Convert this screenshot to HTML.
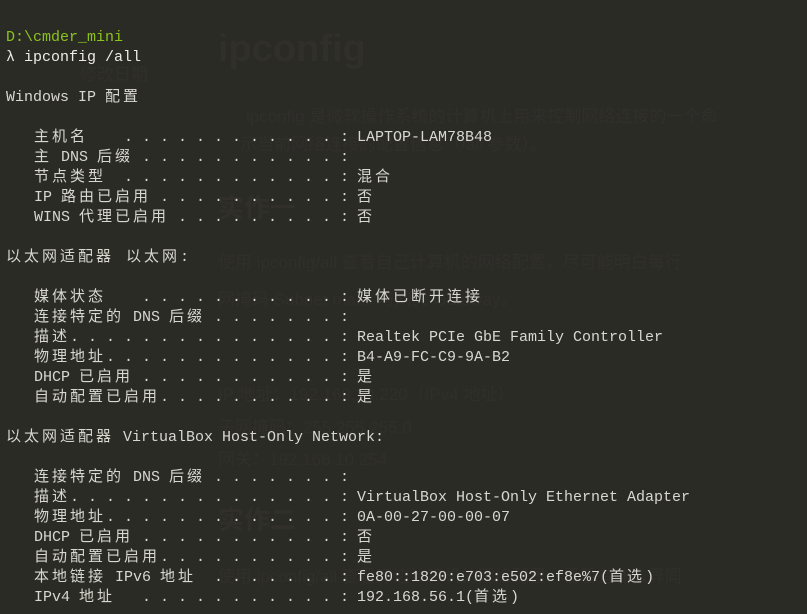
<!DOCTYPE html>
<html><head><meta charset="utf-8"><style>
html,body{margin:0;padding:0}
body{width:807px;height:614px;background:#2b2b26;position:relative;overflow:hidden;font-family:"Liberation Mono","Noto Sans CJK SC",monospace;font-size:15px;color:#d8d8d0}
i{font-style:normal;letter-spacing:3px}
.g{position:absolute;color:#302f2a;font-family:"Liberation Sans","Noto Sans CJK SC",sans-serif;white-space:nowrap}
.l{position:absolute;left:6px;height:20px;line-height:20px;white-space:pre}
.r{position:absolute;left:34px;width:660px;height:20px;line-height:20px;white-space:pre;overflow:hidden}
.r .d{position:absolute;right:345px;top:0}
.r .k{position:relative;background:#2b2b26;padding-right:8px}
.r .v{position:absolute;left:323px;top:0}
</style></head><body>
<div class="g" style="left:218px;top:28px;font-size:38px;font-weight:bold">ipconfig</div>
<div class="g" style="left:80px;top:60px;font-size:17px">修改日期</div>
<div class="g" style="left:246px;top:102px;font-size:17px">ipconfig 是微软操作系统的计算机上用来控制网络连接的一个命</div>
<div class="g" style="left:240px;top:130px;font-size:17px">示当前网络连接的配置信息（/all 参数）。</div>
<div class="g" style="left:218px;top:188px;font-size:26px;font-weight:bold">实作一</div>
<div class="g" style="left:218px;top:248px;font-size:17px">使用 ipconfig/all 查看自己计算机的网络配置，尽可能明白每行</div>
<div class="g" style="left:218px;top:285px;font-size:17px">网掩码 Subnet mask 与网关 Gateway。</div>
<div class="g" style="left:218px;top:380px;font-size:17px">IP 地址：192.168.10.220（IPv4 地址）</div>
<div class="g" style="left:218px;top:413px;font-size:17px">子网掩码：255.255.255.0</div>
<div class="g" style="left:218px;top:445px;font-size:17px">网关：192.168.10.254</div>
<div class="g" style="left:218px;top:500px;font-size:26px;font-weight:bold">实作二</div>
<div class="g" style="left:218px;top:562px;font-size:17px">使用 ipconfig/all 查看旁边计算机的网络配置，看看有什么异同</div>

<div class="l" style="top:28px;color:#8cc21c">D:\cmder_mini</div>
<div class="l" style="top:48px;color:#ecece4">λ ipconfig /all</div>
<div class="l" style="top:88px">Windows IP <i>配置</i></div>

<div class="r" style="top:128px"><div class="d">. . . . . . . . . . . . . . . . . . . :</div><span class="k"><i>主机名</i>  </span><span class="v">LAPTOP-LAM78B48</span></div>
<div class="r" style="top:148px"><div class="d">. . . . . . . . . . . . . . . . . . . :</div><span class="k"><i>主</i> DNS <i>后缀</i></span></div>
<div class="r" style="top:168px"><div class="d">. . . . . . . . . . . . . . . . . . . :</div><span class="k"><i>节点类型</i> </span><span class="v"><i>混合</i></span></div>
<div class="r" style="top:188px"><div class="d">. . . . . . . . . . . . . . . . . . . :</div><span class="k">IP <i>路由已启用</i></span><span class="v"><i>否</i></span></div>
<div class="r" style="top:208px"><div class="d">. . . . . . . . . . . . . . . . . . . :</div><span class="k">WINS <i>代理已启用</i></span><span class="v"><i>否</i></span></div>

<div class="l" style="top:248px"><i>以太网适配器 以太网</i>:</div>

<div class="r" style="top:288px"><div class="d">. . . . . . . . . . . . . . . . . . . :</div><span class="k"><i>媒体状态</i>  </span><span class="v"><i>媒体已断开连接</i></span></div>
<div class="r" style="top:308px"><div class="d">. . . . . . . . . . . . . . . . . . . :</div><span class="k"><i>连接特定的</i> DNS <i>后缀</i></span></div>
<div class="r" style="top:328px"><div class="d">. . . . . . . . . . . . . . . . . . . :</div><span class="k" style="padding-right:0"><i>描述</i></span><span class="v">Realtek PCIe GbE Family Controller</span></div>
<div class="r" style="top:348px"><div class="d">. . . . . . . . . . . . . . . . . . . :</div><span class="k" style="padding-right:0"><i>物理地址</i></span><span class="v">B4-A9-FC-C9-9A-B2</span></div>
<div class="r" style="top:368px"><div class="d">. . . . . . . . . . . . . . . . . . . :</div><span class="k">DHCP <i>已启用</i></span><span class="v"><i>是</i></span></div>
<div class="r" style="top:388px"><div class="d">. . . . . . . . . . . . . . . . . . . :</div><span class="k" style="padding-right:0"><i>自动配置已启用</i></span><span class="v"><i>是</i></span></div>

<div class="l" style="top:428px"><i>以太网适配器</i> VirtualBox Host-Only Network:</div>

<div class="r" style="top:468px"><div class="d">. . . . . . . . . . . . . . . . . . . :</div><span class="k"><i>连接特定的</i> DNS <i>后缀</i></span></div>
<div class="r" style="top:488px"><div class="d">. . . . . . . . . . . . . . . . . . . :</div><span class="k" style="padding-right:0"><i>描述</i></span><span class="v">VirtualBox Host-Only Ethernet Adapter</span></div>
<div class="r" style="top:508px"><div class="d">. . . . . . . . . . . . . . . . . . . :</div><span class="k" style="padding-right:0"><i>物理地址</i></span><span class="v">0A-00-27-00-00-07</span></div>
<div class="r" style="top:528px"><div class="d">. . . . . . . . . . . . . . . . . . . :</div><span class="k">DHCP <i>已启用</i></span><span class="v"><i>否</i></span></div>
<div class="r" style="top:548px"><div class="d">. . . . . . . . . . . . . . . . . . . :</div><span class="k" style="padding-right:0"><i>自动配置已启用</i></span><span class="v"><i>是</i></span></div>
<div class="r" style="top:568px"><div class="d">. . . . . . . . . . . . . . . . . . . :</div><span class="k"><i>本地链接</i> IPv6 <i>地址</i></span><span class="v">fe80::1820:e703:e502:ef8e%7(<i>首选</i>)</span></div>
<div class="r" style="top:588px"><div class="d">. . . . . . . . . . . . . . . . . . . :</div><span class="k">IPv4 <i>地址</i> </span><span class="v">192.168.56.1(<i>首选</i>)</span></div>
</body></html>
